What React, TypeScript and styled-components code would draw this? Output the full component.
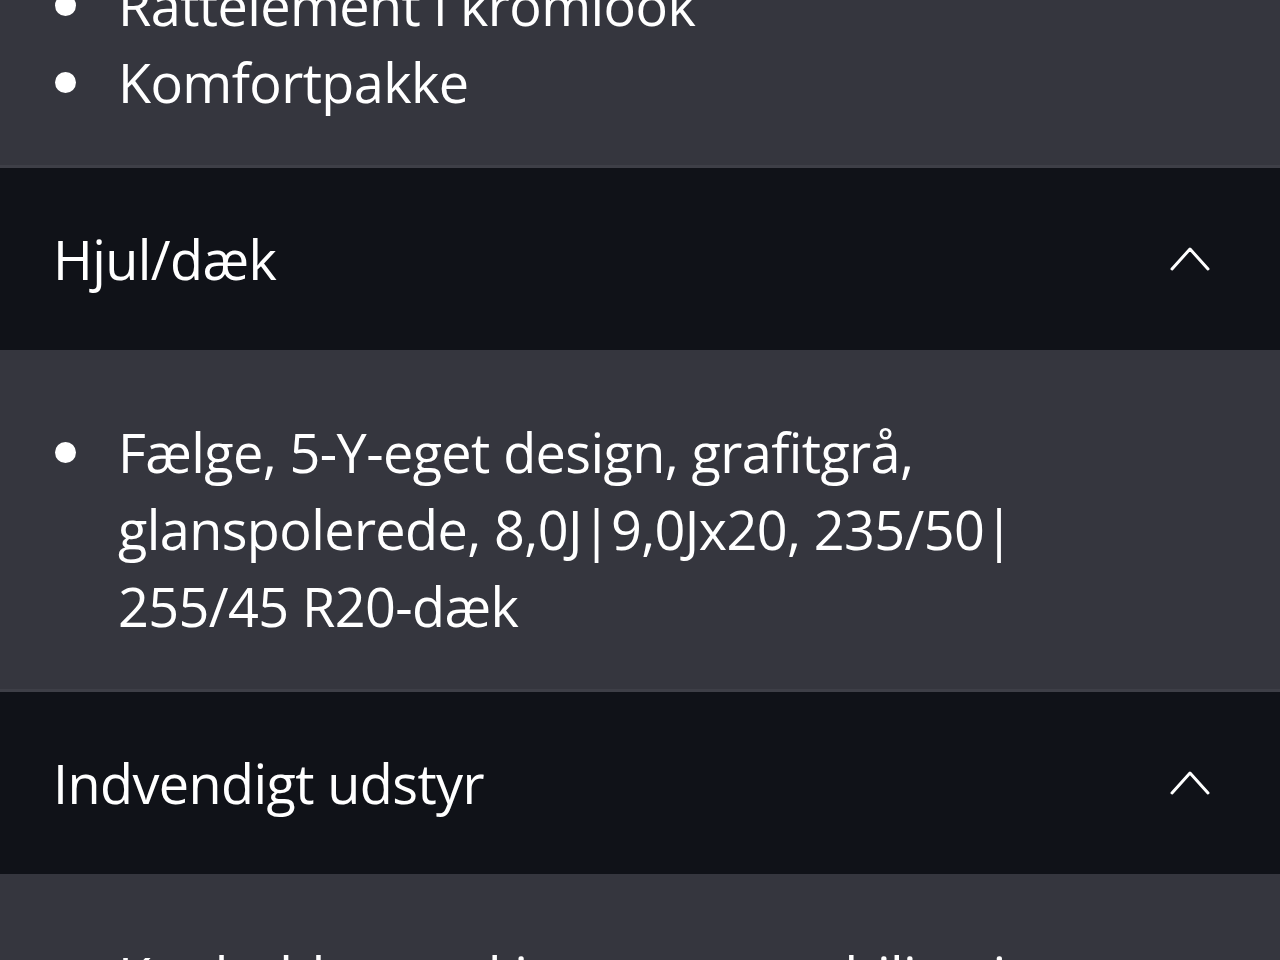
import styled, { createGlobalStyle } from "styled-components";

const GlobalStyle = createGlobalStyle`
  html, body {
    margin: 0;
    padding: 0;
    background-color: #35363e;
    overflow: hidden;
  }
  body {
    font-family: "Open Sans", "Noto Sans", sans-serif;
    color: #ffffff;
  }
`;

const Page = styled.div`
  width: 1280px;
  margin-top: -97px;
  background-color: #35363e;
`;

const Panel = styled.div`
  padding: 64px 53px 44px 53px;
  background-color: #35363e;
`;

const List = styled.ul`
  list-style: none;
  margin: 0;
  padding: 0;
  max-width: 1050px;
`;

const Item = styled.li`
  position: relative;
  padding-left: 65px;
  font-size: 54px;
  line-height: 77px;
  letter-spacing: -0.6px;
  color: #ffffff;
  &::before {
    content: "";
    position: absolute;
    left: 2px;
    top: 28px;
    width: 21px;
    height: 21px;
    border-radius: 50%;
    background-color: #ffffff;
  }
`;

const Header = styled.div`
  box-sizing: border-box;
  height: 185px;
  border-top: 3px solid #3e3f47;
  background-color: #101218;
  display: flex;
  align-items: center;
  justify-content: space-between;
  padding: 0 70px 0 53px;
`;

const Title = styled.span`
  font-size: 54px;
  letter-spacing: -0.6px;
  color: #ffffff;
`;

const Chevron = () => (
  <svg width="40" height="24" viewBox="0 0 40 24" fill="none">
    <polyline
      points="2,22 20,2 38,22"
      stroke="#ffffff"
      strokeWidth="3"
      strokeLinecap="round"
      strokeLinejoin="round"
    />
  </svg>
);

interface ISection {
  title: string;
  items: string[];
}

const sections: ISection[] = [
  {
    title: "Hjul/dæk",
    items: [
      "Fælge, 5-Y-eget design, grafitgrå, glanspolerede, 8,0J|9,0Jx20, 235/50| 255/45 R20-dæk",
    ],
  },
  {
    title: "Indvendigt udstyr",
    items: ["Kopholder med integreret stabilisering"],
  },
];

function App() {
  return (
    <>
      <GlobalStyle />
      <Page>
        <Panel>
          <List>
            <Item>Rattelement i kromlook</Item>
            <Item>Komfortpakke</Item>
          </List>
        </Panel>
        {sections.map((section) => (
          <div key={section.title}>
            <Header>
              <Title>{section.title}</Title>
              <Chevron />
            </Header>
            <Panel>
              <List>
                {section.items.map((item) => (
                  <Item key={item}>{item}</Item>
                ))}
              </List>
            </Panel>
          </div>
        ))}
      </Page>
    </>
  );
}

export default App;
